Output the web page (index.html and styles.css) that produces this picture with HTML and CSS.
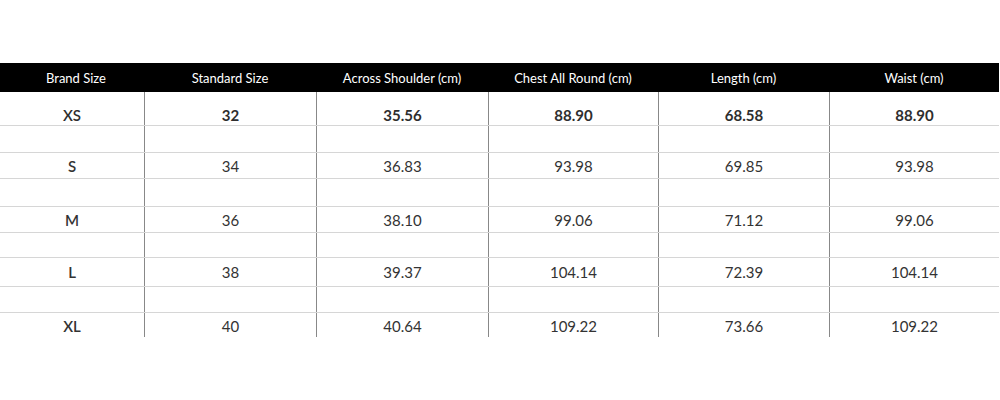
FILE: index.html
```html
<!DOCTYPE html>
<html lang="en">
<head>
<meta charset="utf-8">
<title>Size Chart</title>
<link rel="stylesheet" href="styles.css">
</head>
<body>
<div class="chart">
  <div class="row head">
    <div class="cell">Brand Size</div>
    <div class="cell">Standard Size</div>
    <div class="cell">Across Shoulder (cm)</div>
    <div class="cell">Chest All Round (cm)</div>
    <div class="cell">Length (cm)</div>
    <div class="cell">Waist (cm)</div>
  </div>
  <div class="row data first">
    <div class="cell">XS</div><div class="cell">32</div><div class="cell">35.56</div><div class="cell">88.90</div><div class="cell">68.58</div><div class="cell">88.90</div>
  </div>
  <div class="row gap g1"><div class="cell"></div><div class="cell"></div><div class="cell"></div><div class="cell"></div><div class="cell"></div><div class="cell"></div></div>
  <div class="row data r2">
    <div class="cell">S</div><div class="cell">34</div><div class="cell">36.83</div><div class="cell">93.98</div><div class="cell">69.85</div><div class="cell">93.98</div>
  </div>
  <div class="row gap g2"><div class="cell"></div><div class="cell"></div><div class="cell"></div><div class="cell"></div><div class="cell"></div><div class="cell"></div></div>
  <div class="row data r3">
    <div class="cell">M</div><div class="cell">36</div><div class="cell">38.10</div><div class="cell">99.06</div><div class="cell">71.12</div><div class="cell">99.06</div>
  </div>
  <div class="row gap g3"><div class="cell"></div><div class="cell"></div><div class="cell"></div><div class="cell"></div><div class="cell"></div><div class="cell"></div></div>
  <div class="row data r4">
    <div class="cell">L</div><div class="cell">38</div><div class="cell">39.37</div><div class="cell">104.14</div><div class="cell">72.39</div><div class="cell">104.14</div>
  </div>
  <div class="row gap g4"><div class="cell"></div><div class="cell"></div><div class="cell"></div><div class="cell"></div><div class="cell"></div><div class="cell"></div></div>
  <div class="row data last">
    <div class="cell">XL</div><div class="cell">40</div><div class="cell">40.64</div><div class="cell">109.22</div><div class="cell">73.66</div><div class="cell">109.22</div>
  </div>
</div>
</body>
</html>
```

FILE: styles.css
```css
html, body {
  margin: 0;
  padding: 0;
  background: #ffffff;
}

body {
  font-family: Lato, "Open Sans", sans-serif;
}

.chart {
  width: 999px;
  margin-top: 63px;
}

.row {
  display: grid;
  grid-template-columns: 144px 172px 172px 170px 171px 170px;
  box-sizing: border-box;
}

.cell {
  display: flex;
  align-items: center;
  justify-content: center;
  box-sizing: border-box;
}

.head {
  background: #000000;
  color: #ffffff;
  height: 29px;
  font-size: 13px;
}

.head .cell:first-child {
  padding-left: 8px;
}

.data, .gap {
  border-bottom: 1px solid #d6d6d6;
  color: #333333;
  font-size: 15px;
}

.data .cell:first-child {
  font-weight: 600;
}

.data .cell + .cell,
.gap .cell + .cell {
  border-left: 1px solid #888888;
}

.first {
  height: 34px;
  font-weight: 700;
  font-size: 15px;
  color: #2e2e2e;
}

.first .cell {
  padding-top: 12px;
}

.g1 { height: 27px; }
.r2 { height: 26px; }
.g2 { height: 28px; }
.r3 { height: 26px; }
.g3 { height: 25px; }
.r4 { height: 29px; }
.g4 { height: 26px; }

.last {
  height: 24px;
  border-bottom: none;
}

.last .cell {
  padding-top: 2px;
}
```
